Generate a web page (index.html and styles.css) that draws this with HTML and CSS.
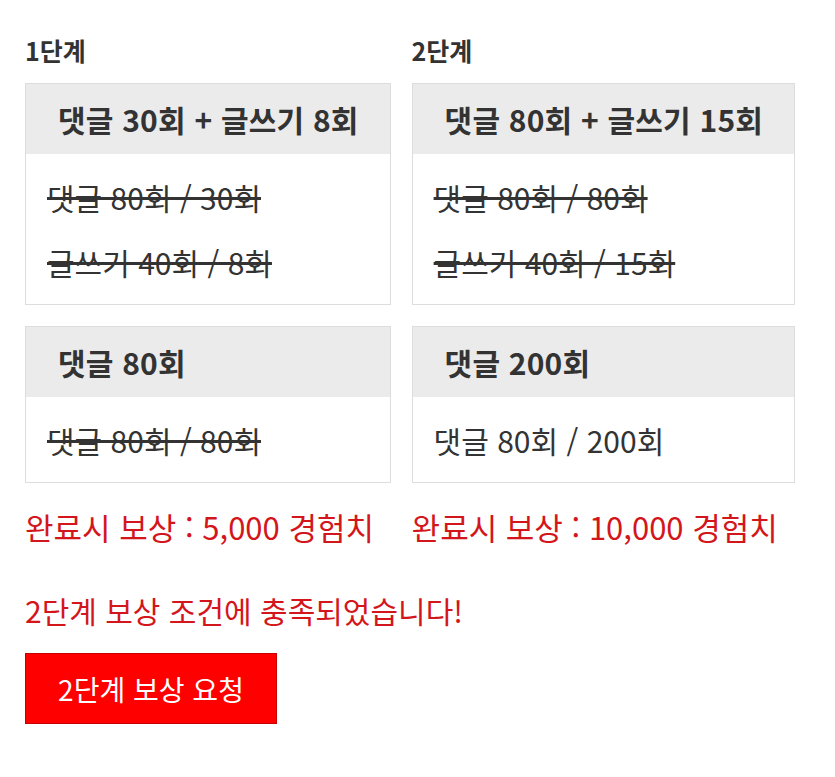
FILE: index.html
```html
<!DOCTYPE html>
<html lang="ko">
<head>
  <meta charset="UTF-8" />
  <meta name="viewport" content="width=device-width, initial-scale=1.0" />
  <title>보상 단계</title>
  <link rel="stylesheet" href="styles.css">
</head>
<body>
<section class="mission">
  <div class="stages">
    <div class="stage">
      <h2>1단계</h2>
      <div class="box">
        <div class="box-head">댓글 30회 + 글쓰기 8회</div>
        <div class="box-body">
          <p class="done">댓글 80회 / 30회</p>
          <p class="done">글쓰기 40회 / 8회</p>
        </div>
      </div>
      <div class="box">
        <div class="box-head">댓글 80회</div>
        <div class="box-body">
          <p class="done">댓글 80회 / 80회</p>
        </div>
      </div>
      <p class="reward">완료시 보상 : 5,000 경험치</p>
    </div>
    <div class="stage">
      <h2>2단계</h2>
      <div class="box">
        <div class="box-head">댓글 80회 + 글쓰기 15회</div>
        <div class="box-body">
          <p class="done">댓글 80회 / 80회</p>
          <p class="done">글쓰기 40회 / 15회</p>
        </div>
      </div>
      <div class="box">
        <div class="box-head">댓글 200회</div>
        <div class="box-body">
          <p>댓글 80회 / 200회</p>
        </div>
      </div>
      <p class="reward">완료시 보상 : 10,000 경험치</p>
    </div>
  </div>
  <p class="notice">2단계 보상 조건에 충족되었습니다!</p>
  <button class="claim">2단계 보상 요청</button>
</section>
</body>
</html>
```

FILE: styles.css
```css
/* Reset */
* { margin: 0; padding: 0; box-sizing: border-box; }
body {
  font-family: 'Noto Sans CJK KR', 'Noto Sans', sans-serif;
  background: #fff; color: #333;
}
.mission { padding: 34px 25px 40px; }
/* Stage columns */
.stages { display: flex; gap: 21px; align-items: flex-start; }
.stage { display: flex; flex-direction: column; }
.stage h2 { font-size: 25px; font-weight: 700; line-height: 32px; margin-bottom: 17px; color: #333; }
/* Mission box */
.box { border: 1px solid #ddd; margin-bottom: 21px; }
.box-head {
  background: #ebebeb; padding: 14px 31px 14px 32px; font-size: 30px; font-weight: 700;
  line-height: 42px; letter-spacing: 0.2px; white-space: nowrap; color: #333;
}
.box-body { padding: 20px 21px 19px; display: flex; flex-direction: column; gap: 19px; }
.box-body p { font-size: 30px; line-height: 46px; color: #333; white-space: nowrap; }
.box-body .done { text-decoration: line-through; }
/* Reward */
.reward { color: #d3161b; font-size: 31px; line-height: 40px; margin-top: 3px; white-space: nowrap; }
.notice { color: #d3161b; font-size: 30px; line-height: 40px; margin-top: 43px; }
.claim {
  margin-top: 23px; width: 252px; height: 71px;
  background: #ff0000; border: 1px solid #c40000; color: #fff;
  font-family: inherit; font-size: 28px; cursor: pointer;
}
```
